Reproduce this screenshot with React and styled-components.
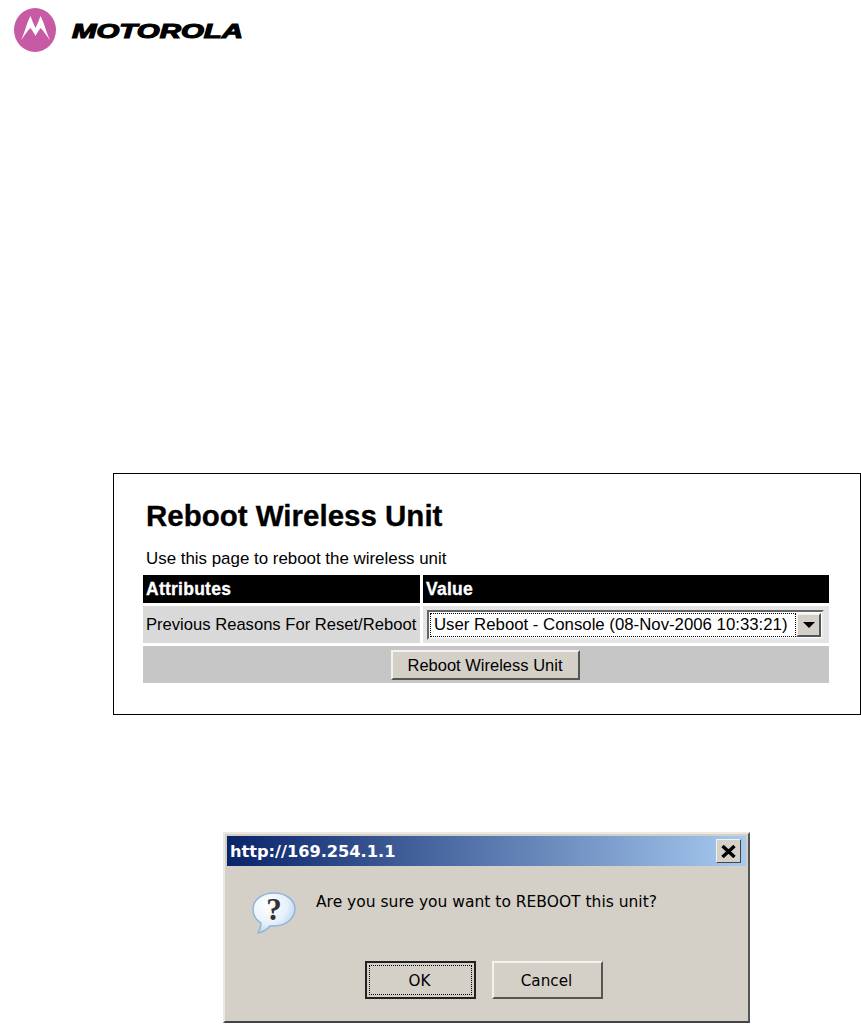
import React from 'react';
import styled, { createGlobalStyle } from 'styled-components';

const Global = createGlobalStyle`
  html, body { margin: 0; padding: 0; background: #fff; }
  body { font-family: "Liberation Sans", Arial, sans-serif; color: #000; }
`;

const Page = styled.div`
  width: 861px;
  height: 1025px;
  overflow: hidden;
  display: flex;
  flex-direction: column;
`;

const LogoRow = styled.div`
  display: flex;
  align-items: center;
  height: 44px;
  padding: 8px 0 0 14px;
`;

const Wordmark = styled.div`
  margin-left: 16px;
  font-size: 21px;
  line-height: 21px;
  font-weight: bold;
  font-style: italic;
  color: #000;
  -webkit-text-stroke: 1.2px #000;
  transform-origin: left center;
  transform: scale(1.4, 0.94);
  white-space: nowrap;
`;

const Panel = styled.section`
  box-sizing: border-box;
  margin: 421px 0 0 113px;
  width: 748px;
  height: 242px;
  border: 1px solid #000;
  padding: 23px 31px 0 29px;
`;

const Title = styled.h1`
  margin: 0 0 0 3px;
  font-size: 29.5px;
  line-height: 38px;
  font-weight: bold;
  -webkit-text-stroke: 0.3px #000;
`;

const Intro = styled.p`
  margin: 15px 0 0 3px;
  font-size: 16.9px;
  line-height: 18px;
`;

const Grid = styled.div`
  margin-top: 7px;
  display: grid;
  grid-template-columns: 277px 406px;
  grid-template-rows: 28px 37px 37px;
  column-gap: 3px;
  row-gap: 3px;
`;

const HeadCell = styled.div`
  background: #000;
  color: #fff;
  font-size: 17.5px;
  letter-spacing: 0.25px;
  font-weight: bold;
  line-height: 28px;
  padding-left: 3px;
  -webkit-text-stroke: 0.3px #fff;
`;

const LabelCell = styled.div`
  background: #d9d9d9;
  font-size: 16.6px;
  line-height: 37px;
  padding-left: 3px;
  white-space: nowrap;
`;

const ValueCell = styled.div`
  background: #e4e4e4;
  display: flex;
  align-items: center;
  padding-left: 4px;
`;

const ActionRow = styled.div`
  grid-column: 1 / 3;
  background: #c6c6c6;
  display: flex;
  align-items: center;
  justify-content: center;
  padding-right: 1px;
`;

const Select = styled.div`
  box-sizing: border-box;
  width: 397px;
  height: 30px;
  display: flex;
  align-items: center;
  padding: 1px;
  background: #fff;
  border: 2px solid;
  border-color: #666 #e8e8e8 #e8e8e8 #666;
`;

const SelectText = styled.div`
  flex: 1;
  height: 24px;
  box-sizing: border-box;
  border: 1px dotted #000;
  font-size: 16.8px;
  line-height: 22px;
  padding-left: 3px;
  white-space: nowrap;
`;

const SelectArrow = styled.div`
  box-sizing: border-box;
  width: 25px;
  height: 24px;
  background: #d4d0c8;
  border: 2px solid;
  border-color: #f4f2ee #555 #555 #f4f2ee;
  display: flex;
  align-items: center;
  justify-content: center;
  &::after {
    content: "";
    border-left: 6px solid transparent;
    border-right: 6px solid transparent;
    border-top: 6px solid #000;
  }
`;

const FormButton = styled.button`
  box-sizing: border-box;
  width: 189px;
  height: 30px;
  padding: 1px 1px 0 0;
  background: #d4d0c8;
  border: 2px solid;
  border-color: #f4f2ee #555 #555 #f4f2ee;
  font-family: "Liberation Sans", Arial, sans-serif;
  font-size: 16.5px;
  color: #000;
`;

const Dialog = styled.section`
  box-sizing: border-box;
  margin: 117px 0 0 223px;
  width: 527px;
  height: 191px;
  background: #d4d0c8;
  border: 2px solid;
  border-color: #ece9e2 #555 #444 #ece9e2;
  padding: 2px;
`;

const TitleBar = styled.div`
  height: 30px;
  display: flex;
  align-items: center;
  justify-content: space-between;
  padding: 0 5px 0 3px;
  background: linear-gradient(90deg, #0a246a 0%, #a6caf0 100%);
`;

const TitleText = styled.span`
  color: #fff;
  font-family: "DejaVu Sans", sans-serif;
  font-weight: bold;
  font-size: 16.2px;
  padding-top: 1px;
`;

const CloseButton = styled.div`
  box-sizing: border-box;
  width: 25px;
  height: 24px;
  background: #d4d0c8;
  border: 1px solid;
  border-color: #f4f2ee #444 #444 #f4f2ee;
  display: flex;
  align-items: center;
  justify-content: center;
`;

const MessageRow = styled.div`
  display: flex;
  align-items: flex-start;
  padding: 22px 0 0 23px;
  height: 73px;
`;

const MessageText = styled.div`
  margin: 3px 0 0 18px;
  font-family: "DejaVu Sans", sans-serif;
  font-size: 15.5px;
  line-height: 22px;
  white-space: nowrap;
`;

const ButtonRow = styled.div`
  display: flex;
  gap: 16px;
  margin-left: 138px;
`;

const DialogButton = styled.button`
  box-sizing: border-box;
  position: relative;
  width: 111px;
  height: 38px;
  padding: 2px 2px 0 0;
  background: #d4d0c8;
  border: 2px solid;
  border-color: ${(p) => (p.$focused ? '#222 #222 #222 #222' : '#f4f2ee #555 #555 #f4f2ee')};
  font-family: "DejaVu Sans", sans-serif;
  font-size: 15.2px;
  color: #000;
  &::after {
    content: "";
    position: absolute;
    inset: 2px;
    border: ${(p) => (p.$focused ? '1px dotted #000' : 'none')};
  }
`;

function Logo() {
  return (
    <svg width="42" height="44" viewBox="0 0 42 44">
      <ellipse cx="21" cy="22" rx="21" ry="22" fill="#c75aa4" />
      <path
        d="M7 32 C11 24 13 14 16.5 8 C18 12 20 17 21.5 20 C23 17 25 12 26.5 8 C30 14 32 24 36 32 C32 27 29 22 26.5 20 C25 22 23 25 21.5 28 C20 25 18 22 16.5 20 C14 22 11 27 7 32 Z"
        fill="#fff"
      />
    </svg>
  );
}

function QuestionIcon() {
  return (
    <svg width="48" height="46" viewBox="0 0 48 46">
      <defs>
        <radialGradient id="bubble" cx="0.35" cy="0.3" r="0.85">
          <stop offset="0" stopColor="#ffffff" />
          <stop offset="0.55" stopColor="#e6f1fa" />
          <stop offset="1" stopColor="#9fc4e8" />
        </radialGradient>
      </defs>
      <path
        d="M24 5 C36 5 45 12 45 21 C45 31 35 38 24 38 L20 38 C17 42 13 44 8 45 C10 41 11 38 11 35 C6 32 3 27 3 21 C3 12 12 5 24 5 Z"
        fill="url(#bubble)"
        stroke="#8fb3d9"
        strokeWidth="1.4"
      />
      <text x="24" y="32" fontFamily="Liberation Serif, serif" fontWeight="bold" fontSize="31" textAnchor="middle" fill="#333">?</text>
    </svg>
  );
}

function CloseIcon() {
  return (
    <svg width="15" height="13" viewBox="0 0 15 13">
      <path d="M1.5 1 L13.5 12 M13.5 1 L1.5 12" stroke="#000" strokeWidth="3.4" />
    </svg>
  );
}

export default function App() {
  return (
    <Page>
      <Global />
      <LogoRow>
        <Logo />
        <Wordmark>MOTOROLA</Wordmark>
      </LogoRow>
      <Panel>
        <Title>Reboot Wireless Unit</Title>
        <Intro>Use this page to reboot the wireless unit</Intro>
        <Grid>
          <HeadCell>Attributes</HeadCell>
          <HeadCell>Value</HeadCell>
          <LabelCell>Previous Reasons For Reset/Reboot</LabelCell>
          <ValueCell>
            <Select>
              <SelectText>User Reboot - Console (08-Nov-2006 10:33:21)</SelectText>
              <SelectArrow />
            </Select>
          </ValueCell>
          <ActionRow>
            <FormButton>Reboot Wireless Unit</FormButton>
          </ActionRow>
        </Grid>
      </Panel>
      <Dialog>
        <TitleBar>
          <TitleText>http://169.254.1.1</TitleText>
          <CloseButton><CloseIcon /></CloseButton>
        </TitleBar>
        <MessageRow>
          <QuestionIcon />
          <MessageText>Are you sure you want to REBOOT this unit?</MessageText>
        </MessageRow>
        <ButtonRow>
          <DialogButton $focused>OK</DialogButton>
          <DialogButton>Cancel</DialogButton>
        </ButtonRow>
      </Dialog>
    </Page>
  );
}
